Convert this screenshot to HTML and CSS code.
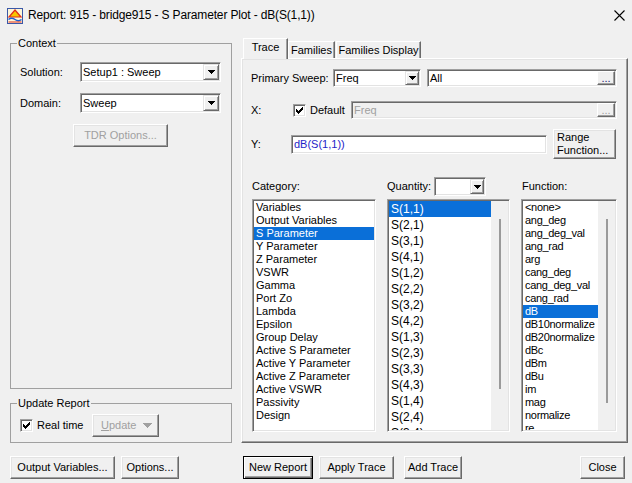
FILE: index.html
```html
<!DOCTYPE html>
<html>
<head>
<meta charset="utf-8">
<title>Report</title>
<link rel="stylesheet" href="styles.css">
</head>
<body>
<div class="window">
  <header class="titlebar">
    <svg class="app-icon" width="16" height="16" viewBox="0 0 16 16">
      <rect x="0.5" y="0.5" width="15" height="15" fill="#fdf6d8" stroke="#3a58a8"/>
      <path d="M8 2 L14 9 H2 Z" fill="#f7c600" stroke="#e02a1a" stroke-width="1.2"/>
      <path d="M1.5 11.5 Q4.5 9 8 11.5 T14.5 11.5" fill="none" stroke="#1f5fd0" stroke-width="1.5"/>
      <path d="M1.5 14 H14.5" stroke="#e02a1a" stroke-width="1"/>
    </svg>
    <span class="title">Report: 915 - bridge915 - S Parameter Plot - dB(S(1,1))</span>
    <svg class="close-x" width="11" height="11" viewBox="0 0 11 11"><path d="M0.5 0.5 L10.5 10.5 M10.5 0.5 L0.5 10.5" stroke="#000" stroke-width="1.1" fill="none"/></svg>
  </header>

  <div class="main">
    <div class="left">
      <fieldset class="group context">
        <legend>Context</legend>
        <div class="ctx-grid">
          <span>Solution:</span>
          <div class="combo ctx-combo"><span class="val">Setup1 : Sweep</span><span class="drop"><svg width="7" height="4" viewBox="0 0 7 4"><path d="M0 0h7v1H0z M1 1h5v1H1z M2 2h3v1H2z M3 3h1v1H3z"/></svg></span></div>
          <span>Domain:</span>
          <div class="combo ctx-combo"><span class="val">Sweep</span><span class="drop"><svg width="7" height="4" viewBox="0 0 7 4"><path d="M0 0h7v1H0z M1 1h5v1H1z M2 2h3v1H2z M3 3h1v1H3z"/></svg></span></div>
        </div>
        <button class="btn disabled tdr">TDR Options...</button>
      </fieldset>
      <fieldset class="group update">
        <legend>Update Report</legend>
        <div class="update-row">
          <span class="check"><svg width="7" height="7" viewBox="0 0 7 7"><path d="M6 0h1v1h-1z M5 1h2v1h-2z M0 2h1v1h-1z M4 2h3v1h-3z M0 3h2v1h-2z M3 3h3v1h-3z M0 4h5v1h-5z M1 5h3v1h-3z M2 6h1v1h-1z"/></svg></span>
          <span class="rt-label">Real time</span>
          <button class="btn disabled update-btn"><span><u>U</u>pdate</span><svg width="9" height="5" viewBox="0 0 9 5"><path fill="#a0a0a0" d="M0 0h9v1H0z M1 1h7v1H1z M2 2h5v1H2z M3 3h3v1H3z M4 4h1v1H4z"/></svg></button>
        </div>
      </fieldset>
    </div>

    <div class="right">
      <div class="tabs">
        <div class="tab active">Trace</div>
        <div class="tab t-fam">Families</div>
        <div class="tab t-famd">Families Display</div>
      </div>
      <div class="panel">
        <div class="row r1">
          <span class="lbl-ps">Primary Sweep:</span>
          <div class="combo ps-combo"><span class="val">Freq</span><span class="drop narrow"><svg width="7" height="4" viewBox="0 0 7 4"><path d="M0 0h7v1H0z M1 1h5v1H1z M2 2h3v1H2z M3 3h1v1H3z"/></svg></span></div>
          <div class="field all-field"><span class="val">All</span><span class="dots">...</span></div>
        </div>
        <div class="row r2">
          <span class="lbl-x">X:</span>
          <span class="check"><svg width="7" height="7" viewBox="0 0 7 7"><path d="M6 0h1v1h-1z M5 1h2v1h-2z M0 2h1v1h-1z M4 2h3v1h-3z M0 3h2v1h-2z M3 3h3v1h-3z M0 4h5v1h-5z M1 5h3v1h-3z M2 6h1v1h-1z"/></svg></span>
          <span class="default-lbl">Default</span>
          <div class="field dis x-field"><span class="val">Freq</span><span class="dots dis-dots">...</span></div>
        </div>
        <div class="row r3">
          <span class="lbl-y">Y:</span>
          <div class="field y-field"><span class="val blue">dB(S(1,1))</span></div>
          <button class="btn range">Range<br>Function...</button>
        </div>
        <div class="lists">
          <div class="col col-cat">
            <div class="head"><span>Category:</span></div>
            <div class="list">
              <div class="items">
                <div>Variables</div>
                <div>Output Variables</div>
                <div class="sel">S Parameter</div>
                <div>Y Parameter</div>
                <div>Z Parameter</div>
                <div>VSWR</div>
                <div>Gamma</div>
                <div>Port Zo</div>
                <div>Lambda</div>
                <div>Epsilon</div>
                <div>Group Delay</div>
                <div>Active S Parameter</div>
                <div>Active Y Parameter</div>
                <div>Active Z Parameter</div>
                <div>Active VSWR</div>
                <div>Passivity</div>
                <div>Design</div>
              </div>
            </div>
          </div>
          <div class="col col-qty">
            <div class="head"><span class="q-lbl">Quantity:</span><div class="combo q-combo"><span class="val"></span><span class="drop narrow"><svg width="7" height="4" viewBox="0 0 7 4"><path d="M0 0h7v1H0z M1 1h5v1H1z M2 2h3v1H2z M3 3h1v1H3z"/></svg></span></div></div>
            <div class="list">
              <div class="items qty">
                <div class="sel">S(1,1)</div>
                <div>S(2,1)</div>
                <div>S(3,1)</div>
                <div>S(4,1)</div>
                <div>S(1,2)</div>
                <div>S(2,2)</div>
                <div>S(3,2)</div>
                <div>S(4,2)</div>
                <div>S(1,3)</div>
                <div>S(2,3)</div>
                <div>S(3,3)</div>
                <div>S(4,3)</div>
                <div>S(1,4)</div>
                <div>S(2,4)</div>
                <div>S(3,4)</div>
              </div>
              <div class="track"><i class="bar q-bar"></i></div>
            </div>
          </div>
          <div class="col col-fn">
            <div class="head"><span class="f-lbl">Function:</span></div>
            <div class="list">
              <div class="items fn">
                <div>&lt;none&gt;</div>
                <div>ang_deg</div>
                <div>ang_deg_val</div>
                <div>ang_rad</div>
                <div>arg</div>
                <div>cang_deg</div>
                <div>cang_deg_val</div>
                <div>cang_rad</div>
                <div class="sel">dB</div>
                <div>dB10normalize</div>
                <div>dB20normalize</div>
                <div>dBc</div>
                <div>dBm</div>
                <div>dBu</div>
                <div>im</div>
                <div>mag</div>
                <div>normalize</div>
                <div>re</div>
              </div>
              <div class="track"><i class="bar f-bar"></i></div>
            </div>
          </div>
        </div>
      </div>
    </div>

    <div class="btnrow">
      <button class="btn w-ov">Output Variables...</button>
      <button class="btn w-opt">Options...</button>
    </div>
    <div class="btnrow">
      <button class="btn default w-new">New Report</button>
      <button class="btn w-apply">Apply Trace</button>
      <button class="btn w-add">Add Trace</button>
      <button class="btn w-close">Close</button>
    </div>
  </div>
</div>
</body>
</html>
```

FILE: styles.css
```css
* { box-sizing: border-box; }
html, body { margin: 0; padding: 0; }
body {
  width: 632px;
  height: 483px;
  overflow: hidden;
  background: #f0f0f0;
  color: #000;
  font: 11px/13px "Liberation Sans", Arial, sans-serif;
}

/* title bar */
.titlebar {
  height: 31px;
  display: flex;
  align-items: center;
  padding: 0 7px 0 7px;
}
.app-icon { flex: none; }
.title {
  margin-left: 5px;
  font-size: 12px;
  letter-spacing: -0.15px;
}
.close-x { margin-left: auto; flex: none; }

/* main grid */
.main {
  display: grid;
  grid-template-columns: 222px 387px;
  grid-template-rows: 406px 23px;
  column-gap: 9px;
  row-gap: 13px;
  padding: 6px 0 0 10px;
}

/* 3D helpers */
.btn {
  font: inherit;
  line-height: 13px;
  color: #000;
  background: #f0f0f0;
  height: 23px;
  padding: 0;
  border: 1px solid;
  border-color: #fff #696969 #696969 #fff;
  box-shadow: inset -1px -1px #a0a0a0, inset 1px 1px #e3e3e3;
}
.btn.default {
  border: 1px solid #000;
  box-shadow: inset 1px 1px #fff, inset -1px -1px #696969, inset -2px -2px #a0a0a0;
}
.btn.disabled { color: #a0a0a0; }

.combo, .field, .list, .check {
  border: 1px solid;
  border-color: #a0a0a0 #fff #fff #a0a0a0;
  padding: 1px;
  box-shadow: inset 1px 1px #696969, inset -1px -1px #e3e3e3;
  background: #fff;
}

.combo { display: flex; align-items: stretch; }
.combo .val, .field .val { flex: 1; align-self: center; padding-left: 1px; white-space: nowrap; }
.drop {
  width: 16px;
  display: flex;
  align-items: center;
  justify-content: center;
  background: #f0f0f0;
  border: 1px solid;
  border-color: #e3e3e3 #696969 #696969 #e3e3e3;
  box-shadow: inset 1px 1px #fff, inset -1px -1px #a0a0a0;
}
.drop.narrow { width: 14px; }

.check {
  width: 13px;
  height: 13px;
  display: flex;
  align-items: center;
  justify-content: center;
  flex: none;
}

/* group boxes */
.left { display: flex; flex-direction: column; gap: 8px; }
.group {
  margin: 0;
  padding: 0;
  min-inline-size: 0;
  border: 1px solid #a0a0a0;
}
.group legend {
  margin-left: 6px;
  padding: 0 1px;
  line-height: 13px;
}
.context { flex: 1; }
.ctx-grid {
  display: grid;
  grid-template-columns: 60px 141px;
  grid-auto-rows: 20px;
  row-gap: 11px;
  align-items: center;
  margin: 12px 0 0 9px;
}
.ctx-combo { height: 20px; }
.tdr { width: 95px; margin: 11px 0 0 62px; display: block; }

.update { padding: 4px 0 5px 0; }
.update-row { display: flex; align-items: center; padding-left: 9px; }
.rt-label { margin-left: 4px; width: 55px; }
.update-btn {
  width: 67px;
  display: flex;
  align-items: center;
  justify-content: space-between;
  padding: 0 6px 0 8px;
}

/* tabs */
.right { display: flex; flex-direction: column; }
.tabs {
  height: 21px;
  display: flex;
  align-items: flex-end;
  padding-left: 2px;
}
.tab {
  height: 17px;
  border: 1px solid;
  border-bottom: none;
  border-color: #fff #696969 transparent #fff;
  box-shadow: inset -1px 0 #a0a0a0;
  text-align: center;
  line-height: 16px;
  background: #f0f0f0;
}
.tab.active {
  width: 45px;
  height: 21px;
  margin-bottom: -1px;
  position: relative;
  z-index: 1;
  line-height: 17px;
}
.t-fam { width: 47px; }
.t-famd { width: 85px; margin-left: 1px; }

.panel {
  flex: 1;
  border: 1px solid;
  border-color: #fff #696969 #696969 #fff;
  box-shadow: inset -1px -1px #a0a0a0, inset 1px 1px #e3e3e3;
  padding: 10px 10px 0 9px;
}
.row { display: flex; align-items: center; }
.r1 { height: 18px; }
.lbl-ps { width: 82px; }
.ps-combo { width: 88px; height: 18px; }
.field { display: flex; align-items: center; }
.all-field { flex: 1; margin-left: 6px; height: 18px; }
.dots {
  width: 18px;
  height: 14px;
  align-self: flex-end;
  text-align: center;
  line-height: 12px;
  color: #1c1c70;
  background: #f0f0f0;
  border: 1px solid;
  border-color: #fff #696969 #696969 #fff;
  box-shadow: inset -1px -1px #a0a0a0;
}
.dis-dots { color: #a0a0a0; }

.r2 { height: 18px; margin-top: 14px; }
.lbl-x { width: 42px; }
.default-lbl { margin-left: 4px; }
.x-field { margin-left: auto; width: 266px; height: 18px; }
.field.dis { background: #f0f0f0; color: #a0a0a0; }

.r3 { height: 30px; margin-top: 10px; }
.lbl-y { width: 40px; }
.y-field { width: 256px; height: 19px; }
.blue { color: #1e1ec8; }
.range {
  width: 63px;
  height: 30px;
  margin-left: 6px;
  text-align: left;
  padding-left: 3px;
}

/* lists */
.lists { display: flex; margin-top: 18px; }
.col { display: flex; flex-direction: column; }
.col-cat { width: 124px; margin-left: 1px; }
.col-qty { width: 123px; margin-left: 11px; }
.col-fn { width: 96px; margin-left: 11px; }
.head { height: 19px; display: flex; align-items: center; }
.q-lbl { width: 47px; }
.q-combo { width: 52px; height: 19px; }
.f-lbl { padding-left: 1px; }

.list {
  height: 233px;
  margin-top: 3px;
  display: flex;
  overflow: hidden;
}
.items { flex: 1; min-width: 0; overflow: hidden; }
.items div {
  height: 13px;
  line-height: 13px;
  padding-left: 2px;
  white-space: nowrap;
}
.items.fn div { letter-spacing: -0.3px; }
.items.qty div {
  height: 16px;
  line-height: 16px;
  font-size: 12px;
}
.items .sel { background: #0a6fd8; color: #fff; }
.track {
  width: 17px;
  flex: none;
  background: #f0f0f0;
  display: flex;
  justify-content: center;
  align-items: flex-start;
}
.bar { display: block; width: 2px; background: #9a9a9a; margin-top: 18px; }
.q-bar { height: 170px; }
.f-bar { height: 184px; }

/* bottom buttons */
.btnrow { display: flex; gap: 6px; }
.w-ov { width: 105px; }
.w-opt { width: 58px; }
.w-new { width: 70px; margin-left: 2px; }
.w-apply { width: 75px; }
.w-add { width: 58px; margin-left: 4px; }
.w-close { width: 45px; margin-left: auto; margin-right: 3px; }
```
